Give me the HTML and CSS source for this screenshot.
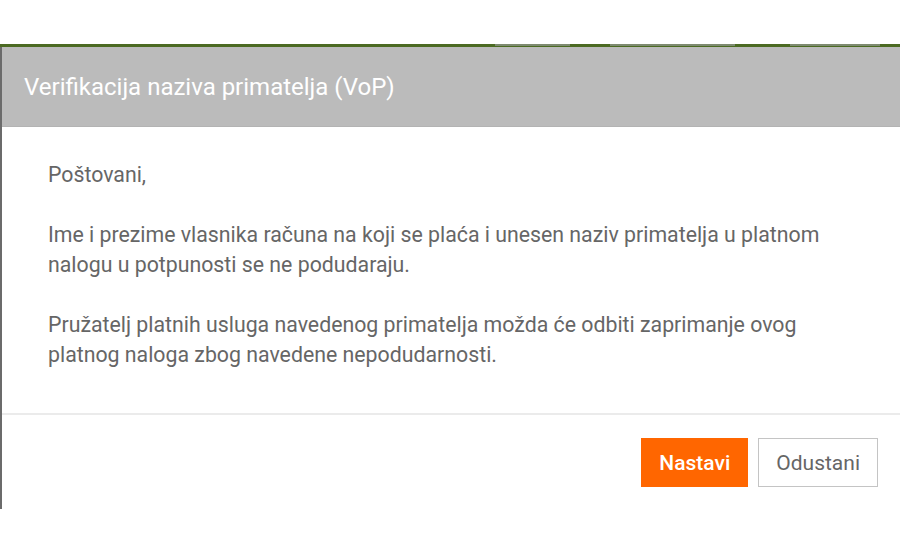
FILE: index.html
```html
<!DOCTYPE html>
<html>
<head>
    <title>Verifikacija naziva primatelja</title>
    <link rel="stylesheet" href="styles.css">
</head>
<body>
    <div class="page">
        <div class="topbar"></div>
        <div class="navbar">
            <span class="nav-item n1"></span>
            <span class="nav-item n2"></span>
            <span class="nav-item n3"></span>
        </div>

        <!-- VoP dialog -->
        <div class="modal">
            <div class="modal-header">Verifikacija naziva primatelja (VoP)</div>
            <div class="modal-body">
                <p>Poštovani,</p>
                <p>Ime i prezime vlasnika računa na koji se plaća i unesen naziv primatelja u platnom nalogu u potpunosti se ne podudaraju.</p>
                <p>Pružatelj platnih usluga navedenog primatelja možda će odbiti zaprimanje ovog platnog naloga zbog navedene nepodudarnosti.</p>
            </div>
            <div class="modal-footer">
                <button class="btn btn-primary">Nastavi</button>
                <button class="btn btn-default">Odustani</button>
            </div>
        </div>
    </div>
</body>
</html>
```

FILE: styles.css
```css
body {
    margin: 0;
    padding: 0;
    background-color: #fff;
    font-family: Roboto, "Liberation Sans", sans-serif;
}

.page {
    width: 900px;
    height: 560px;
    overflow: hidden;
}

.topbar {
    height: 44px;
    background-color: #fff;
}

.navbar {
    height: 3px;
    background-color: #4b6a22;
    display: flex;
    align-items: flex-start;
}

.nav-item {
    height: 2px;
    background-color: #7d8a70;
}

.n1 {
    margin-left: 495px;
    width: 75px;
}

.n2 {
    margin-left: 40px;
    width: 125px;
}

.n3 {
    margin-left: 55px;
    width: 90px;
}

.modal {
    border-left: 2px solid #6b6b6b;
    background-color: #fff;
}

.modal-header {
    height: 80px;
    padding-left: 22px;
    display: flex;
    align-items: center;
    background-color: #bbbbbb;
    color: #fff;
    font-size: 24px;
    border-bottom: 1px solid #b3b3b3;
    box-sizing: border-box;
}

.modal-body {
    padding: 33px 60px 43px 46px;
    color: #666;
    font-size: 21.3px;
    line-height: 30px;
}

.modal-body p {
    margin: 0 0 30px 0;
}

.modal-body p:last-child {
    margin-bottom: 0;
}

.modal-footer {
    border-top: 2px solid #ebebeb;
    padding: 23px 22px 22px 0;
    display: flex;
    justify-content: flex-end;
    gap: 10px;
}

.btn {
    height: 49px;
    padding: 0 17px;
    font-family: Roboto, "Liberation Sans", sans-serif;
    font-size: 21px;
    cursor: pointer;
    border-radius: 0;
}

.btn-primary {
    background-color: #ff6600;
    border: 1px solid #ff6600;
    color: #fff;
    font-weight: 500;
}

.btn-default {
    background-color: #fff;
    border: 1px solid #c4c4c4;
    color: #666;
}
```
